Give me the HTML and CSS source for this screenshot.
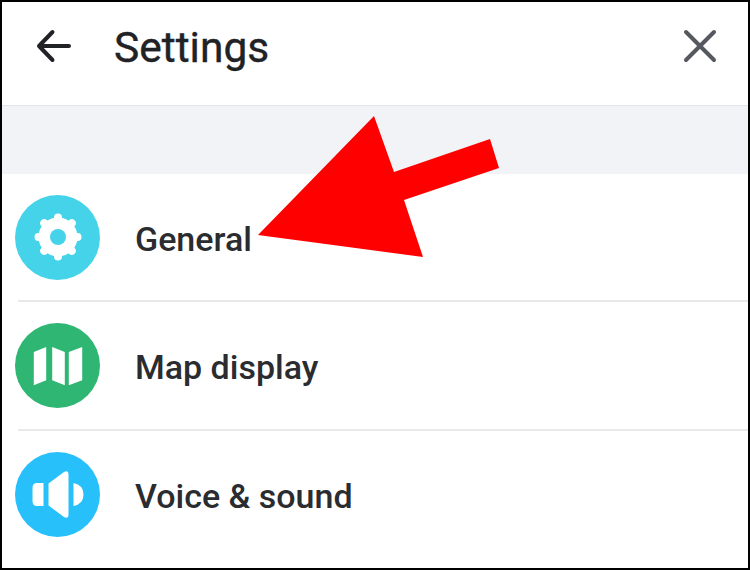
FILE: index.html
```html
<!DOCTYPE html>
<html lang="en">
  <head>
    <meta charset="UTF-8" />
    <meta name="viewport" content="width=device-width, initial-scale=1.0" />
    <title>Settings</title>
    <link rel="stylesheet" href="styles.css">
  </head>
  <body>
    <div class="frame">
      <header class="top-bar">
        <svg class="back-icon" width="38" height="38" viewBox="0 0 38 38">
          <path d="M36 19H6M19.500 5L6 19L19.500 33" />
        </svg>
        <h1>Settings</h1>
        <svg class="close-icon" width="34" height="34" viewBox="0 0 34 34">
          <path d="M3 3L31 31M31 3L3 31" />
        </svg>
      </header>
      <div class="band"></div>
      <ul class="menu">
        <li class="row">
          <span class="circle general">
            <svg width="52" height="52" viewBox="0 0 52 52">
              <path class="teeth" d="M26 6.500V45.500M6.500 26H45.500M12.200 12.200L39.800 39.800M39.800 12.200L12.200 39.800" />
              <circle class="gear" cx="26" cy="26" r="19.500" />
              <circle class="hole" cx="26" cy="26" r="8" />
            </svg>
          </span>
          <span class="label">General</span>
        </li>
        <li class="row">
          <span class="circle map">
            <svg width="50" height="50" viewBox="0 0 50 50">
              <path class="shape" d="M0.800 11L13.200 6V39.300L0.800 44.300ZM19.200 6L31.800 11V44.300L19.200 39.300ZM35.800 11L49.200 6V39.300L35.800 44.300Z" />
            </svg>
          </span>
          <span class="label">Map display</span>
        </li>
        <li class="row">
          <span class="circle voice">
            <svg width="54" height="50" viewBox="0 0 54 50">
              <path class="shape" d="M6 13H12.500V36H6Q1.500 36 1.500 31V18Q1.500 13 6 13ZM17.500 13.500L33 2Q37.500 0 37.500 4V45Q37.500 49 33 47L17.500 35.500ZM42.500 13Q52.500 15 52.500 24.500Q52.500 34 42.500 36Z" />
            </svg>
          </span>
          <span class="label">Voice &amp; sound</span>
        </li>
      </ul>
      <svg class="arrow" width="750" height="570" viewBox="0 0 750 570">
        <polygon points="258,235 374,116 394,172 490,139 499,168 404,200 423,257" />
      </svg>
    </div>
  </body>
</html>
```

FILE: styles.css
```css
html,
body {
  margin: 0;
  padding: 0;
}
body {
  width: 750px;
  height: 570px;
  overflow: hidden;
  background-color: white;
  font-family: Roboto, "Liberation Sans", sans-serif;
}
.frame {
  box-sizing: border-box;
  width: 750px;
  height: 570px;
  border: 2px solid black;
  display: flex;
  flex-direction: column;
  overflow: hidden;
}
.top-bar {
  height: 87px;
  flex-shrink: 0;
  display: flex;
  align-items: center;
  padding: 0 31px 16px;
  border-bottom: 1px solid #e4e4e8;
  box-shadow: 0 1px 2px #e9e9ed;
  color: #212226;
}
.top-bar h1 {
  flex: 1;
  margin: 0 0 0 43px;
  font-size: 42.500px;
  font-weight: 400;
  padding-top: 3px;
  -webkit-text-stroke: 0.400px #212226;
}
.back-icon {
  fill: none;
  stroke: #212226;
  stroke-width: 4;
  stroke-linecap: round;
  stroke-linejoin: round;
}
.close-icon {
  fill: none;
  stroke: #55585e;
  stroke-width: 4;
  stroke-linecap: round;
}
.band {
  height: 68px;
  flex-shrink: 0;
  background-color: #f2f3f7;
}
.menu {
  list-style: none;
  margin: 0;
  padding: 0;
  flex: 1;
}
.row {
  display: flex;
  align-items: center;
  gap: 35px;
  height: 126px;
  padding-left: 13px;
  position: relative;
}
.row + .row {
  height: 129px;
  border-top: 2px solid #e9e9eb;
  box-sizing: border-box;
}
.row + .row::before {
  content: "";
  position: absolute;
  left: 0;
  top: -2px;
  width: 16px;
  height: 2px;
  background-color: white;
}
.circle {
  width: 85px;
  height: 85px;
  border-radius: 50%;
  display: flex;
  align-items: center;
  justify-content: center;
  flex-shrink: 0;
}
.general {
  background-color: #45d3ea;
}
.map {
  background-color: #2fb673;
}
.voice {
  background-color: #27c0fb;
}
.gear,
.shape {
  fill: white;
}
.teeth {
  fill: none;
  stroke: white;
  stroke-width: 8;
  stroke-linecap: round;
}
.hole {
  fill: #45d3ea;
}
.label {
  font-size: 34px;
  font-weight: 500;
  color: #2b2c30;
  padding-top: 3px;
}
.arrow {
  position: absolute;
  left: 0;
  top: 0;
}
.arrow polygon {
  fill: #ff0000;
}
```
